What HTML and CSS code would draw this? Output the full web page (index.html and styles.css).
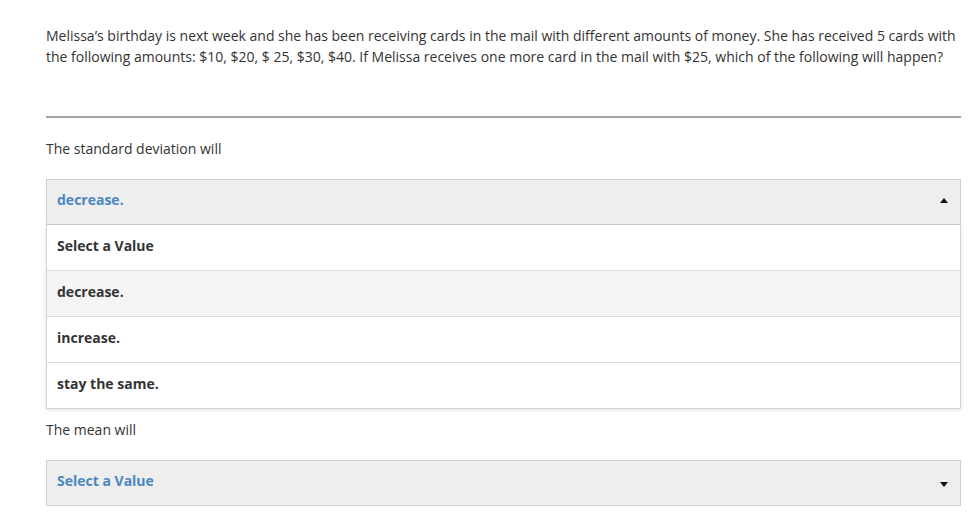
FILE: index.html
```html
<!DOCTYPE html>
<html>
<head>
<meta charset="utf-8">
<link rel="stylesheet" href="styles.css">
</head>
<body>
<div class="page">
  <p class="question">Melissa’s birthday is next week and she has been receiving cards in the mail with different amounts of money. She has received 5 cards with the following amounts: $10, $20, $ 25, $30, $40. If Melissa receives one more card in the mail with $25, which of the following will happen?</p>
  <div class="rule"></div>
  <div class="label">The standard deviation will</div>
  <div class="select open">
    <div class="select-head">
      <span class="value">decrease.</span>
      <span class="caret up"></span>
    </div>
    <ul class="options">
      <li class="option">Select a Value</li>
      <li class="option active">decrease.</li>
      <li class="option">increase.</li>
      <li class="option">stay the same.</li>
    </ul>
  </div>
  <div class="label after-list">The mean will</div>
  <div class="select">
    <div class="select-head">
      <span class="value">Select a Value</span>
      <span class="caret down"></span>
    </div>
  </div>
</div>
</body>
</html>
```
FILE: styles.css
```css
html, body {
  margin: 0;
  padding: 0;
  background: #fff;
}
body {
  font-family: "Open Sans", "DejaVu Sans", sans-serif;
  font-size: 14px;
  color: #333;
}
.page {
  padding: 25px 15px 0 46px;
  width: 915px;
}
.question {
  margin: 0;
  line-height: 21px;
}
.rule {
  margin-top: 49px;
  height: 2px;
  background: #a3a3a3;
}
.label {
  margin-top: 20px;
  line-height: 21px;
}
.label.after-list {
  margin-top: 10px;
}
.select {
  margin-top: 20px;
}
.select-head {
  box-sizing: border-box;
  height: 46px;
  display: flex;
  align-items: center;
  justify-content: space-between;
  padding: 0 12px 5px 10px;
  background: #eeeeee;
  border: 1px solid #cfcfcf;
}
.value {
  font-weight: 700;
  color: #4b87bf;
}
.caret {
  width: 0;
  height: 0;
  border-left: 4.5px solid transparent;
  border-right: 4.5px solid transparent;
}
.caret.up {
  border-bottom: 5px solid #111;
  margin-top: 2px;
}
.caret.down {
  border-top: 5px solid #111;
  margin-top: 7px;
}
.options {
  list-style: none;
  margin: 0;
  padding: 0;
  border: 1px solid #d4d4d4;
  border-top: none;
  box-shadow: 0 1px 4px rgba(0,0,0,0.12);
}
.option {
  box-sizing: border-box;
  height: 46px;
  display: flex;
  align-items: center;
  padding: 0 10px 5px 10px;
  font-weight: 700;
  color: #333;
  background: #fff;
  border-bottom: 1px solid #dedede;
}
.option:last-child {
  border-bottom: none;
  height: 45px;
}
.option.active {
  background: #f5f5f5;
}
```
